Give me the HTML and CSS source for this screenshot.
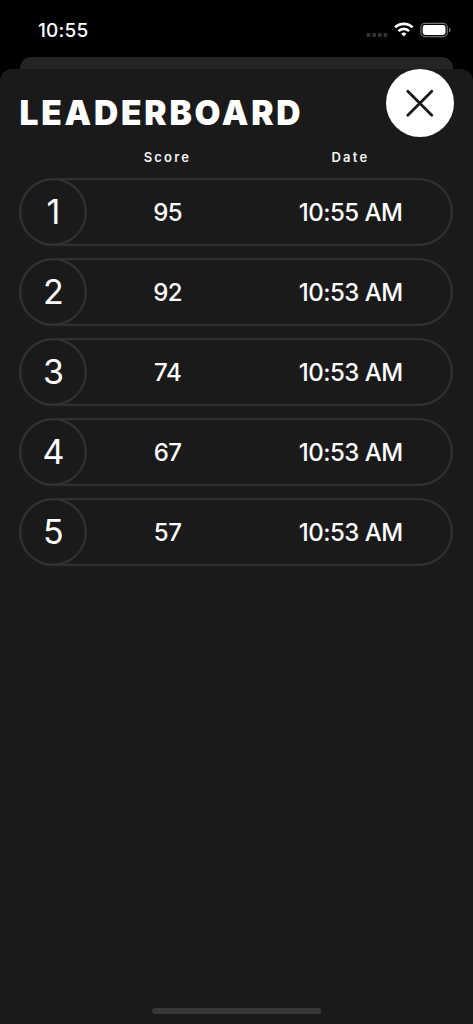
FILE: index.html
```html
<!DOCTYPE html>
<html lang="en">
<head>
<meta charset="utf-8">
<meta name="viewport" content="width=device-width, initial-scale=1">
<title>Leaderboard</title>
<link rel="stylesheet" href="styles.css">
</head>
<body>
<div class="screen">
  <header class="status">
    <span class="clock">10:55</span>
    <svg class="status-icons" width="86" height="20" viewBox="0 0 86 20">
      <g fill="#343434"><rect x=".7" y="13" width="3.7" height="3.9" rx="1"/><rect x="6.4" y="13" width="3.7" height="3.9" rx="1"/><rect x="12" y="13" width="3.7" height="3.9" rx="1"/><rect x="17.5" y="13" width="3.7" height="3.9" rx="1"/></g>
      <g fill="none" stroke="#fff" stroke-width="2.7"><path d="M29.1 7.4a12.3 12.3 0 0 1 17.4 0"/><path d="M32.5 11.1a7.5 7.5 0 0 1 10.6 0"/></g>
      <path fill="#fff" d="M35.2 13.8a3.8 3.8 0 0 1 5.2 0L37.8 16.6z"/>
      <rect x="54.9" y="3.4" width="26.4" height="13.2" rx="4" fill="none" stroke="#707070" stroke-width="1.2"/>
      <rect x="56.7" y="5" width="22.8" height="10" rx="2.4" fill="#fff"/>
      <path fill="#707070" d="M83 7.6c2.2.8 2.2 4 0 4.8z"/>
    </svg>
  </header>
  <div class="back-card"></div>
  <main class="sheet">
    <div class="title-bar">
      <h1 class="title">LEADERBOARD</h1>
      <button class="close" aria-label="Close">
        <svg width="68" height="68" viewBox="0 0 68 68"><path d="M21.8 22.2 45.8 46.2M45.8 22.2 21.8 46.2" fill="none" stroke="#1a1a1a" stroke-width="2.8" stroke-linecap="round"/></svg>
      </button>
    </div>
    <div class="columns labels"><span></span><span>Score</span><span>Date</span></div>
    <div class="list">
      <div class="columns row"><span class="rank">1</span><span>95</span><span>10:55 AM</span></div>
      <div class="columns row"><span class="rank">2</span><span>92</span><span>10:53 AM</span></div>
      <div class="columns row"><span class="rank">3</span><span>74</span><span>10:53 AM</span></div>
      <div class="columns row"><span class="rank">4</span><span>67</span><span>10:53 AM</span></div>
      <div class="columns row"><span class="rank">5</span><span>57</span><span>10:53 AM</span></div>
    </div>
    <div class="home-indicator"></div>
  </main>
</div>
</body>
</html>
```
FILE: styles.css
```css
* { box-sizing: border-box; }
body { margin: 0; background: #000; color: #fff; font-family: Inter, "Liberation Sans", sans-serif; }
.screen { width: 473px; height: 1024px; display: flex; flex-direction: column; overflow: hidden; background: #000; }
.status { height: 57px; flex: none; display: flex; justify-content: space-between; align-items: flex-start; padding: 20px 21px 0 38px; }
.clock { font-size: 19px; line-height: 22px; font-weight: 500; letter-spacing: .2px; }
.status-icons { display: block; }
.back-card { height: 12px; flex: none; margin: 0 20px; border-radius: 11px 11px 0 0; background: #242424; }
.sheet { flex: 1; display: flex; flex-direction: column; padding: 0 19.6px 10px 19.4px; border-radius: 12px 12px 0 0; background: #1a1a1a; }
.title-bar { height: 68px; display: flex; justify-content: space-between; margin-right: -.6px; }
.title { margin: 24px 0 0; font-size: 33.5px; line-height: 41px; font-weight: 900; letter-spacing: 2.8px; white-space: nowrap; }
.close { width: 68px; height: 68px; flex: none; padding: 0; border: 0; border-radius: 50%; background: #fff; }
.close svg { display: block; }
.columns { display: grid; grid-template-columns: 56px 183px 183px; align-items: center; text-align: center; }
.labels { height: 40.5px; font-size: 13px; font-weight: 600; letter-spacing: 2.2px; color: #f4f4f4; }
.labels span { padding-left: 1px; }
.list { display: flex; flex-direction: column; gap: 12px; }
.row { height: 68px; border-radius: 34px; box-shadow: inset 0 0 0 2.3px #303034; font-size: 24px; font-weight: 550; letter-spacing: -.5px; }
.row span:not(.rank) { padding: 1px 0 0 1.5px; }
.rank { width: 68px; height: 68px; border-radius: 50%; box-shadow: inset 0 0 0 2.3px #303034; font-size: 34px; line-height: 68px; font-weight: 370; letter-spacing: 0; }
.home-indicator { width: 169px; height: 6px; margin: auto auto 0; border-radius: 3px; background: #383838; }
```
